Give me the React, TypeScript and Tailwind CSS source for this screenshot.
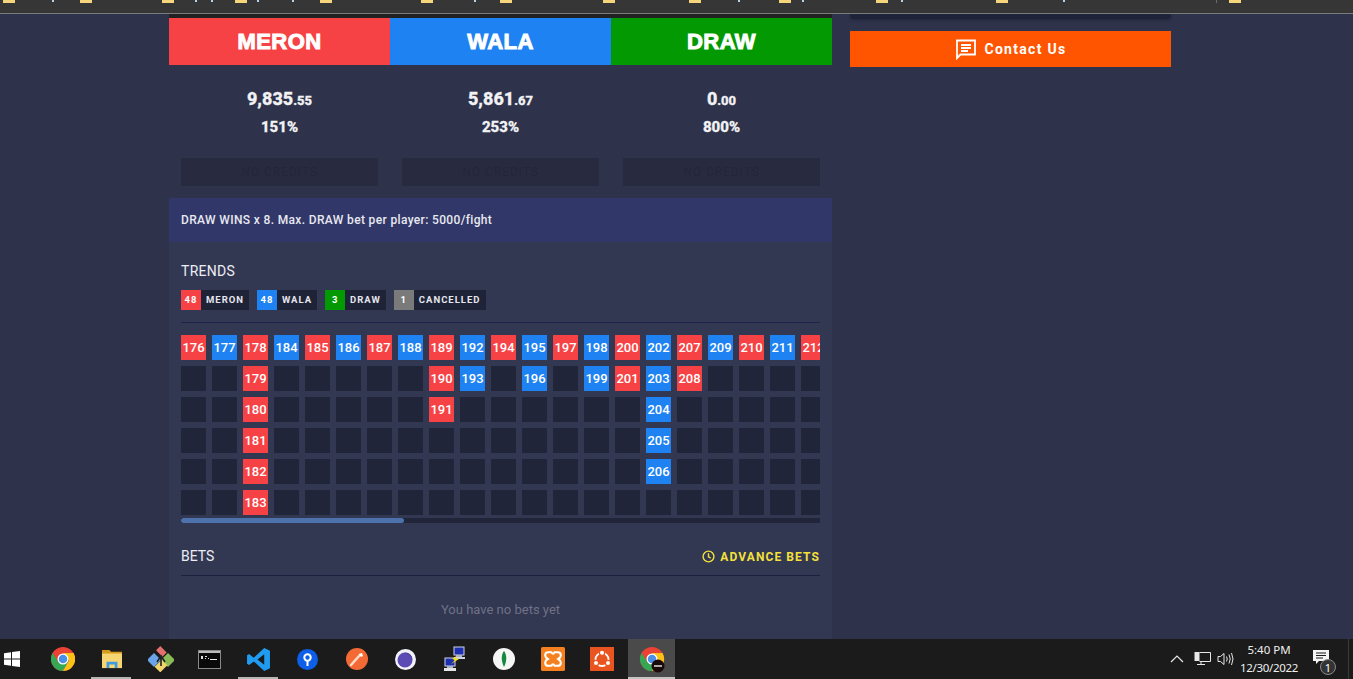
import React from 'react';

const FONT = "font-['Roboto','Liberation_Sans',sans-serif]";

// bookmark bar leftovers, only the bottom of the row is visible
const folders = [3, 80, 162, 235, 320, 421, 500, 603, 689, 779, 876, 996, 1229];
const descenders = [52, 195, 211, 257, 292, 474, 738, 802, 901, 1063];

const sides = [
  { name: 'MERON', bg: 'bg-[#f64244]', whole: '9,835', cents: '.55', pct: '151%' },
  { name: 'WALA', bg: 'bg-[#1f82f2]', whole: '5,861', cents: '.67', pct: '253%' },
  { name: 'DRAW', bg: 'bg-[#029902]', whole: '0', cents: '.00', pct: '800%' },
];

const legend = [
  { count: 48, label: 'MERON', bg: 'bg-[#f64244]' },
  { count: 48, label: 'WALA', bg: 'bg-[#1f82f2]' },
  { count: 3, label: 'DRAW', bg: 'bg-[#029902]' },
  { count: 1, label: 'CANCELLED', bg: 'bg-[#7a7a7a]' },
];

type Col = { c: 'r' | 'b'; n: number[] };

const trend: Col[] = [
  { c: 'r', n: [176] },
  { c: 'b', n: [177] },
  { c: 'r', n: [178, 179, 180, 181, 182, 183] },
  { c: 'b', n: [184] },
  { c: 'r', n: [185] },
  { c: 'b', n: [186] },
  { c: 'r', n: [187] },
  { c: 'b', n: [188] },
  { c: 'r', n: [189, 190, 191] },
  { c: 'b', n: [192, 193] },
  { c: 'r', n: [194] },
  { c: 'b', n: [195, 196] },
  { c: 'r', n: [197] },
  { c: 'b', n: [198, 199] },
  { c: 'r', n: [200, 201] },
  { c: 'b', n: [202, 203, 204, 205, 206] },
  { c: 'r', n: [207, 208] },
  { c: 'b', n: [209] },
  { c: 'r', n: [210] },
  { c: 'b', n: [211] },
  { c: 'r', n: [212] },
];

const Chrome = ({ badge }: { badge?: boolean }) => (
  <svg width="24" height="24" viewBox="0 0 48 48" className={badge ? 'overflow-visible' : ''}>
    <circle cx="24" cy="24" r="24" fill="#ea4335" />
    <path d="M24 24 L3 36 A24 24 0 0 1 3.2 12 L14 29 Z" fill="#34a853" />
    <path d="M3 36 A24 24 0 0 0 24 48 L36 27 L24 24 Z" fill="#34a853" />
    <path d="M24 48 A24 24 0 0 0 45 12 L24 12 L36 27 Z" fill="#fbc116" />
    <circle cx="24" cy="24" r="11" fill="#fff" />
    <circle cx="24" cy="24" r="8.5" fill="#4a90e8" />
    {badge && <circle cx="36" cy="38" r="13" fill="#1a0a0a" />}
    {badge && <rect x="28" y="36.5" width="16" height="3" fill="#ddd" />}
  </svg>
);

const Explorer = () => (
  <svg width="22" height="20" viewBox="0 0 24 22">
    <path d="M1 1h8l2 2h12v3H1z" fill="#d69a1e" />
    <rect x="1" y="5" width="22" height="16" fill="#f8d573" />
    <path d="M6 21v-7h12v7h-3v-4H9v4z" fill="#3d9be0" />
  </svg>
);

const Sourcetree = () => (
  <svg width="26" height="26" viewBox="0 0 26 26">
    <rect x="1" y="9" width="10" height="10" transform="rotate(-45 6 14)" fill="#6aa5ea" />
    <rect x="15" y="9" width="10" height="10" transform="rotate(-45 20 14)" fill="#8bbb55" />
    <rect x="8" y="16" width="10" height="8" transform="rotate(-45 13 20)" fill="#f1d46a" />
    <rect x="9" y="2" width="9" height="6" transform="rotate(45 13 5)" fill="#e2706e" />
    <path d="M9 16 L13 10 L17 16 M13 10v10" stroke="#222" strokeWidth="1.6" fill="none" />
  </svg>
);

const Cmd = () => (
  <svg width="23" height="19" viewBox="0 0 23 19">
    <rect x="0.5" y="0.5" width="22" height="18" fill="#0a0a0a" stroke="#8a8a8a" />
    <rect x="1" y="1" width="21" height="2" fill="#bdbdbd" />
    <path d="M3 6h2v3H3zM7 6h2v1H7zM7 8h1v1H7zM10 8h1v1h-1z" fill="#ddd" />
    <rect x="12" y="9" width="7" height="1" fill="#eee" />
  </svg>
);

const VsCode = () => (
  <svg width="25" height="25" viewBox="0 0 24 24">
    <path d="M17.5 1 L23 3.6 V20.4 L17.5 23 L7.5 13.8 L3 17.2 L1 16 V8 L3 6.8 L7.5 10.2 Z M17.5 7 L11 12 L17.5 17 Z" fill="#1f9cf0" fillRule="evenodd" />
  </svg>
);

const MapPin = () => (
  <svg width="21" height="21" viewBox="0 0 21 21">
    <circle cx="10.5" cy="10.5" r="10.5" fill="#0d5fe8" />
    <circle cx="10.5" cy="8.5" r="3.2" fill="none" stroke="#fff" strokeWidth="2" />
    <path d="M10.5 12v5" stroke="#fff" strokeWidth="2" />
  </svg>
);

const Postman = () => (
  <svg width="22" height="22" viewBox="0 0 22 22">
    <circle cx="11" cy="11" r="11" fill="#f46a35" />
    <path d="M5 17 L14 7" stroke="#ffd9c8" strokeWidth="2.6" strokeLinecap="round" />
    <path d="M13 6 L16 5 L17 8 L15 9 Z" fill="#fff" />
  </svg>
);

const Eclipse = () => (
  <svg width="21" height="21" viewBox="0 0 21 21">
    <circle cx="10.5" cy="10.5" r="10.5" fill="#f2f2f8" />
    <circle cx="10" cy="11" r="7.5" fill="#5a4bb5" />
    <path d="M9 3.5 A7.5 7.5 0 0 1 17.5 11 A9 9 0 0 0 9 3.5 Z" fill="#2f2a70" />
  </svg>
);

const Network = () => (
  <svg width="24" height="26" viewBox="0 0 24 26">
    <rect x="11" y="1" width="10" height="8" fill="#1d2fae" stroke="#cfd3e6" />
    <rect x="13" y="9" width="6" height="2" fill="#aeb3c6" />
    <rect x="11" y="11" width="11" height="2" fill="#cfd3e6" />
    <rect x="2" y="12" width="10" height="8" fill="#1d2fae" stroke="#cfd3e6" />
    <rect x="4" y="20" width="6" height="2" fill="#aeb3c6" />
    <rect x="1" y="22" width="12" height="3" fill="#e4e4e4" />
    <path d="M15 9 L9 13 L12 14 L8 18 L16 13 L12 12 Z" fill="#f5e210" />
  </svg>
);

const Mongo = () => (
  <svg width="22" height="22" viewBox="0 0 22 22">
    <circle cx="11" cy="11" r="11" fill="#f5f5f5" />
    <path d="M11 3 C14 7 14 13 11 19 C8 13 8 7 11 3 Z" fill="#13883e" />
  </svg>
);

const Xampp = () => (
  <svg width="24" height="24" viewBox="0 0 23 23">
    <rect width="23" height="23" rx="1.5" fill="#f4801f" />
    <path d="M7 5 H10 Q11.5 8 13 5 H16 Q19 5 19 8 Q19 10 16.5 11.5 Q19 13 19 15 Q19 18 16 18 H13 Q11.5 15 10 18 H7 Q4 18 4 15 Q4 13 6.5 11.5 Q4 10 4 8 Q4 5 7 5 Z" fill="none" stroke="#fff" strokeWidth="2" />
  </svg>
);

const Ubuntu = () => (
  <svg width="24" height="24" viewBox="0 0 24 24">
    <rect width="24" height="24" fill="#e95420" />
    <circle cx="12" cy="12.5" r="6.5" fill="none" stroke="#fff" strokeWidth="1.8" />
    <circle cx="12" cy="5.8" r="2.6" fill="#fff" stroke="#e95420" strokeWidth="1.2" />
    <circle cx="6" cy="16" r="2.6" fill="#fff" stroke="#e95420" strokeWidth="1.2" />
    <circle cx="18" cy="16" r="2.6" fill="#fff" stroke="#e95420" strokeWidth="1.2" />
  </svg>
);

const taskIcons = [
  { icon: <Chrome />, open: false },
  { icon: <Explorer />, open: true },
  { icon: <Sourcetree />, open: false },
  { icon: <Cmd />, open: false },
  { icon: <VsCode />, open: true },
  { icon: <MapPin />, open: false },
  { icon: <Postman />, open: false },
  { icon: <Eclipse />, open: false },
  { icon: <Network />, open: false },
  { icon: <Mongo />, open: false },
  { icon: <Xampp />, open: false },
  { icon: <Ubuntu />, open: false },
];

const Cell = ({ n, c }: { n?: number; c?: 'r' | 'b' }) => (
  <div
    className={`w-[25px] h-[25px] flex items-center justify-center text-[13px] font-medium text-white ${
      c === 'r' ? 'bg-[#f64244]' : c === 'b' ? 'bg-[#1f82f2]' : 'bg-[#20253a]'
    }`}
  >
    {n}
  </div>
);

const App = () => {
  return (
    <div className={`${FONT} w-full h-screen flex flex-col overflow-hidden bg-[#2e324a]`}>
      {/* browser bookmarks */}
      <div className="relative h-[14px] shrink-0 bg-[#363636] border-b border-[#7b7b7b]">
        {folders.map((x) => (
          <span key={x} className="absolute top-0 w-3 h-[3px] bg-[#f6d67a]" style={{ left: x }} />
        ))}
        {descenders.map((x) => (
          <span key={x} className="absolute top-0 w-[2px] h-[2px] bg-[#b9d3e6]" style={{ left: x }} />
        ))}
        <span className="absolute left-[1216px] top-0 w-px h-[3px] bg-[#6a6a6a]" />
      </div>

      <div className="flex-1 min-h-0 flex gap-[18px] pl-[169px] overflow-hidden">
        {/* main column */}
        <div className="w-[663px] shrink-0 flex flex-col">
          <div className="h-1 bg-[#222222]" />
          <div className="flex h-[47px]">
            {sides.map((s) => (
              <div
                key={s.name}
                className={`flex-1 flex items-center justify-center font-['Liberation_Sans',sans-serif] text-[22px] font-bold tracking-[0.4px] text-white [-webkit-text-stroke:1px_white] ${s.bg}`}
              >
                {s.name}
              </div>
            ))}
          </div>

          <div className="flex h-[133px]">
            {sides.map((s) => (
              <div key={s.name} className="flex-1 flex flex-col items-center px-3">
                <div className="mt-[22px] h-6 leading-6 text-[18px] font-extrabold text-[#f2f2f5] [-webkit-text-stroke:0.3px_#f2f2f5]">
                  {s.whole}
                  <span className="text-[13px]">{s.cents}</span>
                </div>
                <div className="mt-[7px] h-[18px] leading-[18px] text-[15px] font-extrabold text-[#f2f2f5] [-webkit-text-stroke:0.3px_#f2f2f5]">
                  {s.pct}
                </div>
                <div className="mt-[22px] w-full h-7 flex items-center justify-center bg-[#282b40] text-[12px] tracking-[0.08em] text-[#23263a]">
                  NO CREDITS
                </div>
              </div>
            ))}
          </div>

          <div className="h-[44px] flex items-center px-3 bg-[#313768] text-[12px] font-medium tracking-[0.35px] text-[#e8e9f0]">
            DRAW WINS x 8. Max. DRAW bet per player: 5000/fight
          </div>

          <div className="flex-1 px-3 bg-[#323752]">
            <div className="mt-[21px] h-[16px] leading-[16px] text-[14px] tracking-[0.3px] text-[#eceef4]">TRENDS</div>
            <div className="mt-[11px] flex gap-2">
              {legend.map((l) => (
                <div key={l.label} className="flex h-5 bg-[#1f2337] text-[9.5px] font-bold tracking-[1px]">
                  <span className={`w-5 flex items-center justify-center text-white ${l.bg}`}>{l.count}</span>
                  <span className="px-[5px] flex items-center text-[#e6e7ee]">{l.label}</span>
                </div>
              ))}
            </div>
            <div className="mt-3 h-px bg-[#20224a]" />

            <div className="mt-3 overflow-hidden">
              <div className="flex gap-[6px] w-max">
                {trend.map((col) => (
                  <div key={col.n[0]} className="flex flex-col gap-[6px]">
                    {Array.from({ length: 6 }).map((_, i) => (
                      <Cell key={i} n={col.n[i]} c={col.n[i] ? col.c : undefined} />
                    ))}
                  </div>
                ))}
              </div>
            </div>
            <div className="mt-[3px] h-[5px] bg-[#20253a]">
              <div className="w-[223px] h-full rounded-full bg-[#4c71ab]" />
            </div>

            <div className="mt-6 h-[19px] flex items-center justify-between">
              <span className="text-[14px] text-[#eceef4]">BETS</span>
              <span className="flex items-center gap-[5px] text-[12px] font-bold tracking-[1.1px] text-[#f4e13a]">
                <svg width="13" height="13" viewBox="0 0 24 24" fill="none" stroke="currentColor" strokeWidth="2.6">
                  <circle cx="12" cy="12" r="10" />
                  <path d="M12 6v6.5l4 2.5" />
                </svg>
                ADVANCE BETS
              </span>
            </div>
            <div className="mt-[9px] h-px bg-[#1c1f3f]" />
            <div className="mt-6 text-center text-[13px] leading-[19px] text-[#6f7285]">You have no bets yet</div>
          </div>
        </div>

        {/* side column */}
        <div className="w-[321px] shrink-0 flex flex-col">
          <div className="h-[5px] rounded-b-[4px] bg-[#1e2339] shadow-[0_1px_3px_rgba(0,0,0,0.25)]" />
          <button className="mt-3 h-9 flex items-center justify-center gap-[6px] bg-[#ff5500] text-[14px] font-bold tracking-[1.3px] text-white">
            <svg width="24" height="24" viewBox="0 0 24 24" fill="none" stroke="#fff" strokeWidth="1.8">
              <path d="M3 3.5h18v14H6.5L3 21z" />
              <path d="M7 8h10M7 11h10M7 14h7" />
            </svg>
            Contact Us
          </button>
        </div>
      </div>

      {/* windows taskbar */}
      <div className="h-10 shrink-0 flex items-stretch bg-[#1b1b1b] text-white font-['Noto_Sans','Liberation_Sans',sans-serif]">
        <div className="w-[38px] pl-1 flex items-center">
          <svg width="16" height="16" viewBox="0 0 16 16" fill="#fff">
            <path d="M0 2.3 L7 1.3 V7.6 H0 Z M8 1.1 L16 0 V7.6 H8 Z M0 8.5 H7 V14.7 L0 13.7 Z M8 8.5 H16 V16 L8 14.9 Z" />
          </svg>
        </div>
        {taskIcons.map((t, i) => (
          <div key={i} className="relative w-[49px] flex items-center justify-center">
            {t.icon}
            {t.open && <span className="absolute bottom-0 left-[4px] w-[40px] h-[2px] bg-[#b5b5b5]" />}
          </div>
        ))}
        <div className="relative w-[47px] ml-[2px] flex items-center justify-center bg-[#4a4a4a]">
          <Chrome badge />
          <span className="absolute bottom-0 left-0 w-full h-[2px] bg-[#c4c4c4]" />
        </div>

        <div className="ml-auto flex items-center">
          <svg width="14" height="14" viewBox="0 0 14 14" fill="none" stroke="#e8e8e8" strokeWidth="1.2">
            <path d="M1 10 L7 4 L13 10" />
          </svg>
          <svg className="ml-[10px]" width="18" height="16" viewBox="0 0 18 16" fill="none" stroke="#e8e8e8">
            <path d="M5.5 1.5h11v9h-11M3 13.5h8M7 10.5v3" />
            <rect x="1" y="1.5" width="4" height="8" fill="#e8e8e8" />
          </svg>
          <svg className="ml-[5px]" width="17" height="16" viewBox="0 0 17 16" fill="none" stroke="#e8e8e8">
            <path d="M1 5.5h2.5L7 2.5v11L3.5 10.5H1z" />
            <path d="M9.5 5.5q1.5 2.5 0 5M12 3.5q2.5 4.5 0 9M14.5 2q3 6 0 12" />
          </svg>
          <div className="w-[70px] flex flex-col items-center text-[11.5px] leading-[18px] text-[#eeeeee]">
            <span>5:40 PM</span>
            <span className="tracking-[-0.3px]">12/30/2022</span>
          </div>
          <div className="relative w-[26px] h-[26px] ml-[9px]">
            <svg width="17" height="15" viewBox="0 0 17 15" className="absolute left-0 top-[4px]">
              <path d="M0 0h16v11H6l-3 3v-3H0z" fill="#f5f5f5" />
              <path d="M3 3h10M3 5.5h10M3 8h7" stroke="#1b1b1b" />
            </svg>
            <span className="absolute left-[7px] top-[13px] w-4 h-4 rounded-full bg-[#333333] border border-[#8a8a8a] flex items-center justify-center text-[11px] leading-none">
              1
            </span>
          </div>
          <div className="w-px h-full ml-[9px] mr-[4px] bg-[#3a3a3a]" />
        </div>
      </div>
    </div>
  );
};

export default App;
